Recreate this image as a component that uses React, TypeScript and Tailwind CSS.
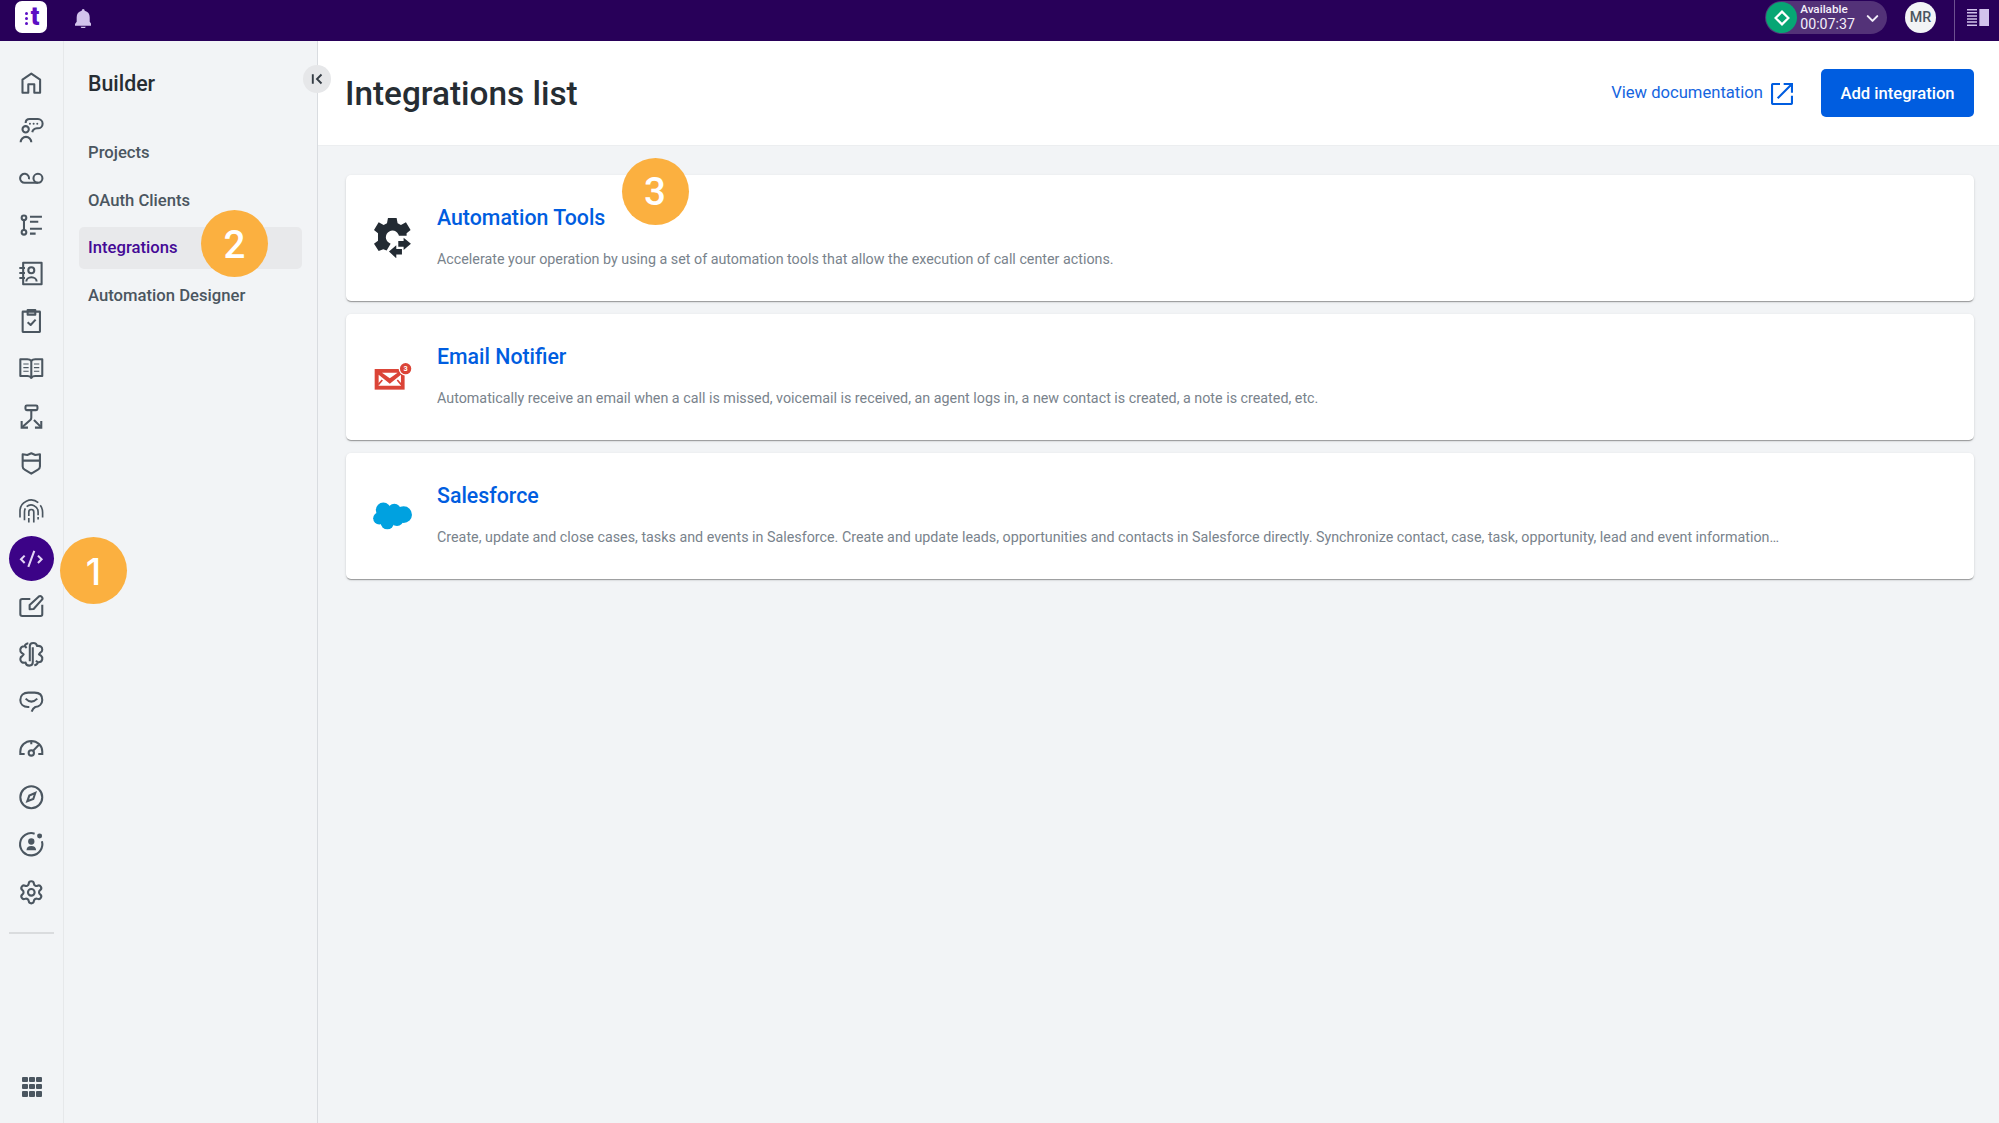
import React from 'react';
import { ChevronDown, Settings } from 'lucide-react';

interface IconProps {
  children: React.ReactNode;
  className?: string;
}

// Icons are drawn around the origin so each one sits centred in its slot
function RailIcon({ children, className = 'text-[#4b5660]' }: IconProps) {
  return (
    <svg
      viewBox="-43 -43 86 86"
      className={`w-[28.6px] h-[28.6px] ${className}`}
      fill="none"
      stroke="currentColor"
      strokeWidth="6.2"
      strokeLinejoin="round"
    >
      {children}
    </svg>
  );
}

const BRAIN_HALF = 'M-4.5 21V-24Q-4.5 -34 6 -34Q16 -34 17 -25Q33 -27 33 -14Q33 -8 27 -5L23 0L29 4Q34 8 33 15Q31 25 19 24L14 19M20 24Q18 32 9 33';

const railItems = [
  {
    name: 'Home',
    icon: <RailIcon><path d="M-26.5 28.5V-11L0 -29L26.5 -11V28.5H9V3H-9V28.5Z" /></RailIcon>,
  },
  {
    name: 'Agent',
    icon: (
      <RailIcon>
        <path d="M-17 -22Q-17 -34 -5 -34H20A14 14 0 0 1 20 -6H17Q5 -5 3 6" />
        <circle cx="-17" cy="-3" r="9.5" />
        <path d="M-32 36A15.8 16 0 0 1 0 36" />
        <g fill="currentColor" stroke="none">
          <circle cx="-4" cy="-20" r="3" />
          <circle cx="7" cy="-20" r="3" />
          <circle cx="18" cy="-20" r="3" />
        </g>
      </RailIcon>
    ),
  },
  {
    name: 'Voicemail',
    icon: (
      <RailIcon>
        <path d="M-7 3A13.5 13.5 0 1 0 -19.5 13.5H20" />
        <circle cx="20" cy="0" r="13.5" />
      </RailIcon>
    ),
  },
  {
    name: 'Queues',
    icon: (
      <RailIcon>
        <circle cx="-22" cy="-22.5" r="7" />
        <circle cx="-22" cy="21" r="7" />
        <path d="M-22 -15V14M-4 -25.5H32M-4 -10.5H21M-4 10.5H32M-4 25H13" />
      </RailIcon>
    ),
  },
  {
    name: 'Contacts',
    icon: (
      <RailIcon>
        <rect x="-24.5" y="-32" width="55.5" height="65" />
        <circle cx="0" cy="-9" r="9" />
        <path d="M-15 25A15.5 13 0 0 1 16 25M-36 -16H-19M-36 -1H-19M-36 14H-19" />
      </RailIcon>
    ),
  },
  {
    name: 'Tasks',
    icon: (
      <RailIcon>
        <rect x="-26" y="-29" width="52" height="61" rx="1" />
        <rect x="-11" y="-34" width="23" height="14" />
        <path d="M-11 3L-2 11L13 -5" />
      </RailIcon>
    ),
  },
  {
    name: 'Knowledge',
    icon: (
      <RailIcon>
        <path d="M0 -22Q-4 -27 -12 -27H-33V23H-12Q-3 23 0 29Q3 23 12 23H33V-27H12Q4 -27 0 -22V27" />
        <path strokeWidth="3.5" d="M-24 -13H-8M-24 -2H-8M-24 9H-8M8 -13H24M8 -2H24M8 9H24" />
      </RailIcon>
    ),
  },
  {
    name: 'Routing',
    icon: (
      <RailIcon>
        <rect x="-17.5" y="-32.5" width="36" height="14" rx="4" />
        <path d="M0 -18V4Q0 8 -3 11L-27 32M8 11L28 31" />
        <path strokeLinejoin="miter" d="M-29 14V34H-10M30 14V34H11" />
      </RailIcon>
    ),
  },
  {
    name: 'Security',
    icon: (
      <RailIcon>
        <path d="M-26 -27L-12 -25L0 -30L12 -25L26 -27V10Q26 16 20 19L0 31L-20 19Q-26 16 -26 10ZM-26 -8H26" />
      </RailIcon>
    ),
  },
  {
    name: 'Identity',
    icon: (
      <RailIcon>
        <g strokeWidth="5">
          <path d="M-34 19V0A33.5 33 0 0 1 21 -26M27 -18Q34 -9 34 3V19" />
          <path d="M-20.5 27V2Q-20.5 -4 -18 -9M-14 -14A21 21 0 0 1 20.5 2V12M20.5 17V25" />
          <path d="M-7.5 34V20M-7.5 14V2A7.5 7.5 0 0 1 7.5 2V34" />
        </g>
      </RailIcon>
    ),
  },
  {
    name: 'Builder',
    active: true,
    icon: (
      <RailIcon className="text-[#e3d5f5]">
        <path strokeLinejoin="miter" d="M-20 -11L-31 0L-20 11M20 -11L31 0L20 11M9 -25L-9 23" />
      </RailIcon>
    ),
  },
  {
    name: 'Studio',
    icon: (
      <RailIcon>
        <path d="M-3 -22H-27Q-33 -22 -33 -17V24Q-33 29 -27 29H28Q33 29 33 24V-5" />
        <path d="M-5 9V-4L22 -29Q27 -33 31 -29Q36 -24 32 -20L7 8Z" />
      </RailIcon>
    ),
  },
  {
    name: 'AI',
    icon: (
      <RailIcon>
        <path d={BRAIN_HALF} />
        <path d={BRAIN_HALF} transform="rotate(180)" />
      </RailIcon>
    ),
  },
  {
    name: 'Feedback',
    icon: (
      <RailIcon>
        <path d="M-6 17H-10C-24 17 -33 8 -33 -4C-33 -18 -23 -26 -9 -26H10C24 -26 33 -18 33 -4C33 8 24 16 12 17Q5 20 1 31" />
        <path d="M-17 -8Q0 10 18 -8" />
      </RailIcon>
    ),
  },
  {
    name: 'Performance',
    icon: (
      <RailIcon>
        <path strokeLinejoin="miter" d="M-20 14H-33V7A33 32 0 0 1 33 7V14H21M0 -26V-15M6 4L25 -16" />
        <circle cx="0" cy="11" r="8" />
      </RailIcon>
    ),
  },
  {
    name: 'Explore',
    icon: (
      <RailIcon>
        <circle r="33" />
        <path strokeLinejoin="miter" d="M12 -13L6 5L-12 12L-6 -5Z" />
      </RailIcon>
    ),
  },
  {
    name: 'Engagement',
    icon: (
      <RailIcon>
        <path d="M10 -32A33.5 33.5 0 1 0 32 -9" />
        <g fill="currentColor" stroke="none">
          <circle cx="25" cy="-25" r="7.5" />
          <circle cx="0" cy="-8.5" r="9.5" />
          <path d="M-14.5 18Q-14 5 0 5Q14 5 14.5 18Z" />
        </g>
      </RailIcon>
    ),
  },
  {
    name: 'Settings',
    icon: <Settings className="w-[26.6px] h-[26.6px] text-[#4b5660]" strokeWidth={1.9} />,
  },
];

const menuItems = ['Projects', 'OAuth Clients', 'Integrations', 'Automation Designer'];

function AutomationIcon() {
  return (
    <svg viewBox="130 533 116 121" className="w-[38.6px] h-[40.3px]" fill="#232b33">
      <path d="M175 533H201L204 549L214 554L229 546L243 569L231 579V586H208A20 20 0 1 0 183 610L171 631L161 627L147 632L133 610L145 601V579L133 569L147 546L162 554L172 549Z" />
      <path d="M206 602H222V592L244 610L222 629V619H206Z" />
      <path d="M200 615V626H217V643H200V654L178 634Z" />
    </svg>
  );
}

function EmailIcon() {
  return (
    <svg viewBox="130 193 116 81" className="w-[38.6px] h-[27px]">
      <rect x="135" y="211" width="90" height="62" fill="#db4437" />
      <path d="M157 222H204L180.5 239Z" fill="#fff" />
      <path d="M147 228L180.5 255L214 228V261H147Z" fill="#fff" />
      <path d="M158 244L146 258M203 244L215 258" stroke="#db4437" strokeWidth="5" />
      <circle cx="228" cy="210" r="21" fill="#fff" />
      <circle cx="228" cy="210" r="17" fill="#db4437" />
      <text x="228" y="218" fontSize="22" fontWeight="700" textAnchor="middle" fill="#fff">3</text>
    </svg>
  );
}

function SalesforceIcon() {
  return (
    <svg viewBox="131 605 118 83" className="w-[39.3px] h-[27.7px]" fill="#00a1e0">
      <circle cx="162" cy="629" r="22.5" />
      <circle cx="195" cy="630" r="20" />
      <circle cx="223" cy="643" r="25" />
      <circle cx="150" cy="654" r="18.5" />
      <circle cx="174" cy="667" r="20" />
      <circle cx="203" cy="657" r="20" />
      <path d="M150 630H223V660H150Z" />
    </svg>
  );
}

const integrations = [
  {
    title: 'Automation Tools',
    description: 'Accelerate your operation by using a set of automation tools that allow the execution of call center actions.',
    icon: <AutomationIcon />,
  },
  {
    title: 'Email Notifier',
    description: 'Automatically receive an email when a call is missed, voicemail is received, an agent logs in, a new contact is created, a note is created, etc.',
    icon: <EmailIcon />,
  },
  {
    title: 'Salesforce',
    description: 'Create, update and close cases, tasks and events in Salesforce. Create and update leads, opportunities and contacts in Salesforce directly. Synchronize contact, case, task, opportunity, lead and event information…',
    icon: <SalesforceIcon />,
  },
];

function StepBadge({ label, className }: { label: string; className: string }) {
  return (
    <div className={`absolute z-10 flex items-center justify-center w-[67px] h-[67px] rounded-full bg-[#fbb040] text-white leading-none font-medium ${className}`}>
      {label}
    </div>
  );
}

function TopBar() {
  return (
    <header className="h-[41px] bg-[#280059] flex items-start justify-between shrink-0">
      <div className="flex items-center h-[34px] pl-[15px]">
        <div className="w-8 h-8 rounded-[7px] bg-white flex items-center justify-center gap-[3px] text-[#5c0fc4]">
          <div className="flex flex-col gap-[2px] pt-[3px]">
            {[0, 1, 2].map((i) => (
              <span key={i} className="w-[3px] h-[3px] rounded-full bg-[#5c0fc4]"></span>
            ))}
          </div>
          <span className="text-[25px] leading-[25px] font-black -mt-[2px] -mr-[2px]">t</span>
        </div>
        <svg viewBox="226 26 49 58" className="w-[16.4px] h-[19.4px] ml-7 mt-[3px]" fill="#d2c3ec">
          <path d="M250.5 26Q255 26 255 31Q270 35 270 51V64L275 71V76H226V71L231 64V51Q231 35 246 31Q246 26 250.5 26ZM243 79H258Q257 84 250.5 84Q244 84 243 79Z" />
        </svg>
      </div>

      <div className="flex h-full">
        <div className="flex items-center h-[34px]">
          <div className="flex items-center h-[33px] w-[122px] rounded-full bg-[#533278] pl-[1px] mt-[1px]">
            <div className="w-[31px] h-[31px] rounded-full bg-[#07a674] flex items-center justify-center shrink-0">
              <svg viewBox="0 0 16 16" className="w-4 h-4" fill="none" stroke="#fff" strokeWidth="2.2">
                <path d="M8 1.6L14.4 8L8 14.4L1.6 8Z" />
              </svg>
            </div>
            <div className="ml-[3.2px] -mt-[1px] w-[56px] text-[#f3effa]">
              <div className="text-[11.7px] leading-[15px] font-medium">Available</div>
              <div className="text-[14.2px] leading-[15px]">00:07:37</div>
            </div>
            <ChevronDown className="w-[19px] h-[19px] ml-[6.5px] mt-[1px] text-[#f3effa]" strokeWidth={2.6} />
          </div>
          <div className="w-[31px] h-[31px] rounded-full bg-[#f2f4f6] ml-[18px] flex items-center justify-center pt-[1px] text-[14.28px] font-medium text-[#4b5660]">
            MR
          </div>
        </div>
        <div className="flex h-full border-l border-[#6d5190] ml-[18px] pl-3 pr-[10px] pt-[9px]">
          <svg viewBox="0 0 66 51" className="w-[22px] h-[17px]" fill="#d2c3ec">
            <path d="M0 0H30V4.500H0ZM0 9.200H30V13.700H0ZM0 18.500H30V23H0ZM0 27.700H30V32.200H0ZM0 37H30V41.500H0ZM0 46.200H30V50.700H0ZM37 0H66V51H37Z" />
          </svg>
        </div>
      </div>
    </header>
  );
}

function Rail() {
  return (
    <nav className="w-16 shrink-0 border-r border-[#e6e8ea] flex flex-col items-center justify-between pt-[18.2px] pb-[26.5px]">
      <div className="flex flex-col items-center">
        {railItems.map((item) => (
          <div key={item.name} className="h-[47.6px] flex items-center">
            <div
              className={
                item.active
                  ? 'w-[45px] h-[45px] rounded-full bg-[#3c0387] flex items-center justify-center'
                  : 'w-[45px] flex items-center justify-center'
              }
            >
              {item.icon}
            </div>
          </div>
        ))}
        <div className="w-[45px] h-[2.5px] bg-[#dadcde] mt-[16px]"></div>
      </div>
      <div className="grid grid-cols-3 gap-[1.5px] ml-[1px]">
        {[...Array(9)].map((_, i) => (
          <div key={i} className="w-[5.6px] h-[5.6px] rounded-[1px] bg-[#4b5660]"></div>
        ))}
      </div>
    </nav>
  );
}

function Sidebar() {
  return (
    <aside className="relative w-[254px] shrink-0 border-r border-[#d9dce0] pl-[15px] pr-[15px]">
      <h2 className="pl-[9px] pt-[27px] text-[21.3px] leading-8 font-medium text-[#262d33]">Builder</h2>
      <ul className="flex flex-col gap-[5.3px] mt-[31.5px]">
        {menuItems.map((item) => (
          <li
            key={item}
            className={`h-[42.3px] pl-[9px] pt-[2px] rounded-[5px] flex items-center text-[16.66px] font-medium ${
              item === 'Integrations' ? 'bg-[#e8e9eb] text-[#440996]' : 'text-[#4b5660]'
            }`}
          >
            {item}
          </li>
        ))}
      </ul>
      <button className="absolute z-10 top-6 -right-[14px] w-[28px] h-[28px] rounded-full bg-[#e6e7e9] flex items-center justify-center">
        <svg viewBox="0 0 12 12" className="w-3 h-3" fill="none" stroke="#343c44" strokeWidth="1.9">
          <path d="M1.8 1.2V10.8M10.5 1.5L6 6L10.5 10.5" />
        </svg>
      </button>
      <StepBadge label="2" className="left-[137px] top-[169px] pt-[3px] text-[38.5px]" />
    </aside>
  );
}

export default function App() {
  return (
    <div className="relative w-full h-[1123px] flex flex-col overflow-hidden bg-[#f2f4f6] font-['Roboto',sans-serif]">
      <TopBar />
      <div className="flex flex-1 min-h-0">
        <Rail />
        <Sidebar />

        <main className="flex-1 min-w-0">
          <div className="h-[105px] bg-white border-b border-[#eceef0] flex items-center justify-between pl-[27px] pr-[25px]">
            <h1 className="pt-[2px] text-[33.32px] font-medium text-[#262d33]">Integrations list</h1>
            <div className="flex items-center">
              <a className="flex items-center gap-2 pt-[1px] text-[16.62px] text-[#1565e0]">
                View documentation
                <svg viewBox="0 0 66 66" className="w-[22px] h-[22px]" fill="none" stroke="#005de0" strokeWidth="6.5">
                  <path d="M27 3H7Q3 3 3 7V59Q3 63 7 63H59Q63 63 63 59V38M38 3H63V29M62 4L20 46" />
                </svg>
              </a>
              <button className="w-[153px] h-[48px] ml-7 pt-[2px] rounded-[5px] bg-[#005de0] text-white text-[16.62px] font-medium">
                Add integration
              </button>
            </div>
          </div>

          <div className="flex flex-col gap-[13.3px] pt-[29px] pl-[27.5px] pr-[25.5px]">
            {integrations.map((item) => (
              <div
                key={item.title}
                className="h-[125.8px] bg-white rounded-[5px] flex items-center pl-[27px] shadow-[0_2px_1px_-1px_rgba(0,0,0,0.2),0_1px_1px_0_rgba(0,0,0,0.14),0_1px_3px_0_rgba(0,0,0,0.12)]"
              >
                <div className="w-10 flex justify-center shrink-0">{item.icon}</div>
                <div className="ml-[24.500px] pb-[2px]">
                  <h3 className="text-[21.32px] leading-[25px] font-medium text-[#005de0]">{item.title}</h3>
                  <p className="mt-[18.5px] text-[14.3px] leading-5 text-[#79838c] whitespace-nowrap">{item.description}</p>
                </div>
              </div>
            ))}
          </div>
        </main>
      </div>

      <StepBadge label="1" className="left-[60px] top-[537px] text-[37px] pt-[1px] font-['Inter',sans-serif]" />
      <StepBadge label="3" className="left-[621.500px] top-[157.500px] pt-[3px] text-[38.5px]" />
    </div>
  );
}
